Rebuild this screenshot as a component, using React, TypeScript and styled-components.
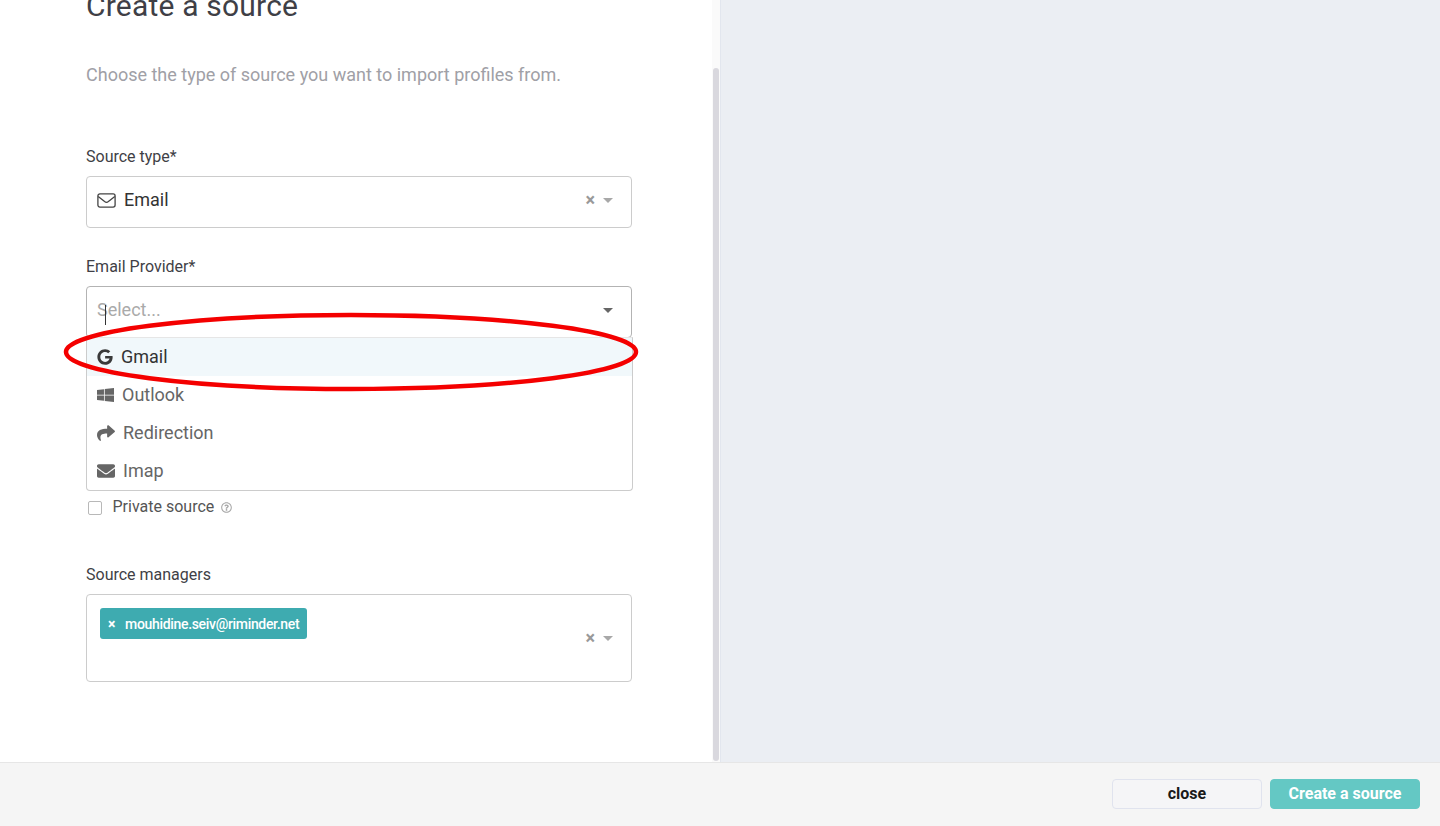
import React from "react";
import styled, { createGlobalStyle } from "styled-components";
import { FaGoogle, FaWindows, FaShare, FaEnvelope, FaRegQuestionCircle } from "react-icons/fa";

const Global = createGlobalStyle`
  html, body { margin: 0; padding: 0; height: 100%; overflow: hidden; background: #fff; }
  body { font-family: Roboto, "Liberation Sans", sans-serif; }
`;

const Page = styled.div`
  width: 1440px; height: 826px; display: flex; flex-direction: column; overflow: hidden;
`;
const Main = styled.div`
  flex: 0 0 762px; display: flex; min-height: 0;
`;
const Panel = styled.div`
  position: relative; width: 720px; height: 762px; overflow: hidden; background: #fff;
  padding: 0 88px 0 86px; box-sizing: border-box;
`;
const Side = styled.div`
  flex: 1; background: #ebeef3; border-left: 1px solid #e2e6ee;
`;
const Track = styled.div`
  position: absolute; right: 0; top: 0; bottom: 0; width: 8px; background: #fafafa;
`;
const Thumb = styled.div`
  position: absolute; right: 1px; top: 68px; bottom: 1px; width: 6px; background: #d9d8de; border-radius: 3px;
`;
const Title = styled.h1`
  margin: -11px 0 0; font-size: 30px; line-height: 34px; font-weight: 400; color: #3f3f46; letter-spacing: 0.2px;
`;
const Subtitle = styled.p`
  margin: 40px 0 0; font-size: 18px; line-height: 24px; font-weight: 400; color: #a0a0a6;
`;
const Label = styled.div<{ $top: number }>`
  margin-top: ${p => p.$top}px; font-size: 16px; line-height: 20px; color: #3f3f46; height: 20px;
`;
const Select = styled.div<{ $h: number; $focus?: boolean; $lift?: boolean }>`
  position: relative; box-sizing: border-box; width: 546px; height: ${p => p.$h}px;
  margin-top: 9px; border: 1px solid ${p => (p.$focus ? "#b3b3b3" : "#cccccc")}; border-radius: 4px;
  display: flex; align-items: center; padding: 0 18px ${p => (p.$lift ? 4 : 0)}px 10px; background: #fff;
`;
const Value = styled.div`
  flex: 1; display: flex; align-items: center; gap: 8px; font-size: 18px; color: #333;
`;
const RaisedText = styled.span`
  padding-bottom: 2px;
`;
const Placeholder = styled.div`
  flex: 1; position: relative; font-size: 18px; color: #aaa; padding-bottom: 2px;
`;
const Caret = styled.span`
  position: absolute; left: 8px; top: 6px; width: 1px; height: 20px; background: #333;
`;
const Clear = styled.span`
  font-size: 18px; line-height: 18px; font-weight: 700; color: #999; margin-right: 8px;
`;
const Arrow = styled.span<{ $dark?: boolean }>`
  width: 0; height: 0; border-style: solid; border-width: 5px 5px 0;
  border-color: ${p => (p.$dark ? "#666" : "#a8a8a8")} transparent transparent;
`;
const Menu = styled.div`
  position: absolute; left: -1px; top: 50px; width: 547px; height: 154px; box-sizing: border-box;
  background: #fff; border: 1px solid #ccc; border-top-color: #e6e6e6; border-radius: 0 0 4px 4px; z-index: 2;
`;
const Option = styled.div<{ $active?: boolean }>`
  height: 38px; display: flex; align-items: center; gap: 8px; padding-left: 10px;
  font-size: 18px; background: ${p => (p.$active ? "#f1f8fb" : "transparent")};
  color: ${p => (p.$active ? "#333" : "#666")};
`;
const WindowsIcon = styled(FaWindows)`
  width: 17px; height: 16px;
`;
const CheckRow = styled.div`
  margin-top: 158px; height: 22px; box-sizing: border-box; padding: 0 0 2px 2px; display: flex; align-items: center;
  font-size: 16px; color: #555;
`;
const Box = styled.span`
  width: 12px; height: 12px; border: 1px solid #b8b8b8; border-radius: 2px; margin-right: 10.5px; margin-top: 4px; background: #fff;
`;
const Help = styled.span`
  display: inline-flex; margin: 2px 0 0 7px; color: #a6a6a6; font-size: 11px;
`;
const Tag = styled.div`
  position: absolute; left: 13px; top: 13px; height: 31px; width: 207px; box-sizing: border-box;
  background: #3eabb0; border-radius: 3px; color: #fff; font-size: 14px; font-weight: 500;
  display: flex; align-items: center; padding-left: 8px; letter-spacing: -0.32px;
`;
const TagX = styled.span`
  width: 17px; font-size: 14px; font-weight: 700;
`;
const Spacer = styled.div`flex: 1;`;
const Footer = styled.footer`
  flex: 1; box-sizing: border-box; background: #f5f5f5; border-top: 1px solid #e6e6e6;
  display: flex; justify-content: flex-end; align-items: flex-start; gap: 8px; padding: 16px 20px 0 0;
`;
const Button = styled.button<{ $primary?: boolean }>`
  width: 150px; height: 30px; box-sizing: border-box; padding: 0 0 2px; border-radius: 4px;
  font-family: Roboto, "Liberation Sans", sans-serif; font-size: 16px; font-weight: 700;
  color: ${p => (p.$primary ? "#fff" : "#1a1a1a")};
  background: ${p => (p.$primary ? "#64c8c4" : "#f5f5f7")};
  border: 1px solid ${p => (p.$primary ? "#64c8c4" : "#e0e3ee")};
`;
const Ring = styled.svg`
  position: absolute; left: 0; top: 0; width: 720px; height: 762px; pointer-events: none; z-index: 3;
`;

const MailOutline = () => (
  <svg width="19" height="15" viewBox="0 0 19 15" fill="none" stroke="#444" strokeWidth="1.3">
    <rect x="0.9" y="0.9" width="17.2" height="13.2" rx="2" />
    <path d="M1.2 3.4 L7.6 8.6 Q9.5 10 11.4 8.6 L17.8 3.4" />
  </svg>
);

export default function App() {
  return (
    <Page>
      <Global />
      <Main>
        <Panel>
          <Title>Create a source</Title>
          <Subtitle>Choose the type of source you want to import profiles from.</Subtitle>
          <Label $top={60}>Source type*</Label>
          <Select $h={52} $lift>
            <Value><MailOutline /><RaisedText>Email</RaisedText></Value>
            <Clear>×</Clear>
            <Arrow />
          </Select>
          <Label $top={29}>Email Provider*</Label>
          <Select $h={52} $focus $lift>
            <Placeholder>Select...<Caret /></Placeholder>
            <Arrow $dark />
            <Menu>
              <Option $active><FaGoogle size={16} color="#3a3a3a" /><RaisedText>Gmail</RaisedText></Option>
              <Option><WindowsIcon color="#666" preserveAspectRatio="none" /><RaisedText>Outlook</RaisedText></Option>
              <Option><FaShare size={18} color="#666" /><RaisedText>Redirection</RaisedText></Option>
              <Option><FaEnvelope size={18} color="#666" /><RaisedText>Imap</RaisedText></Option>
            </Menu>
          </Select>
          <CheckRow>
            <Box />Private source<Help><FaRegQuestionCircle /></Help>
          </CheckRow>
          <Label $top={47}>Source managers</Label>
          <Select $h={88}>
            <Tag><TagX>×</TagX>mouhidine.seiv@riminder.net</Tag>
            <Spacer />
            <Clear>×</Clear>
            <Arrow />
          </Select>
          <Track />
          <Thumb />
          <Ring viewBox="0 0 720 762">
            <ellipse cx="351" cy="352" rx="285" ry="37" fill="none" stroke="#f40000" strokeWidth="4.5" />
          </Ring>
        </Panel>
        <Side />
      </Main>
      <Footer>
        <Button>close</Button>
        <Button $primary>Create a source</Button>
      </Footer>
    </Page>
  );
}
